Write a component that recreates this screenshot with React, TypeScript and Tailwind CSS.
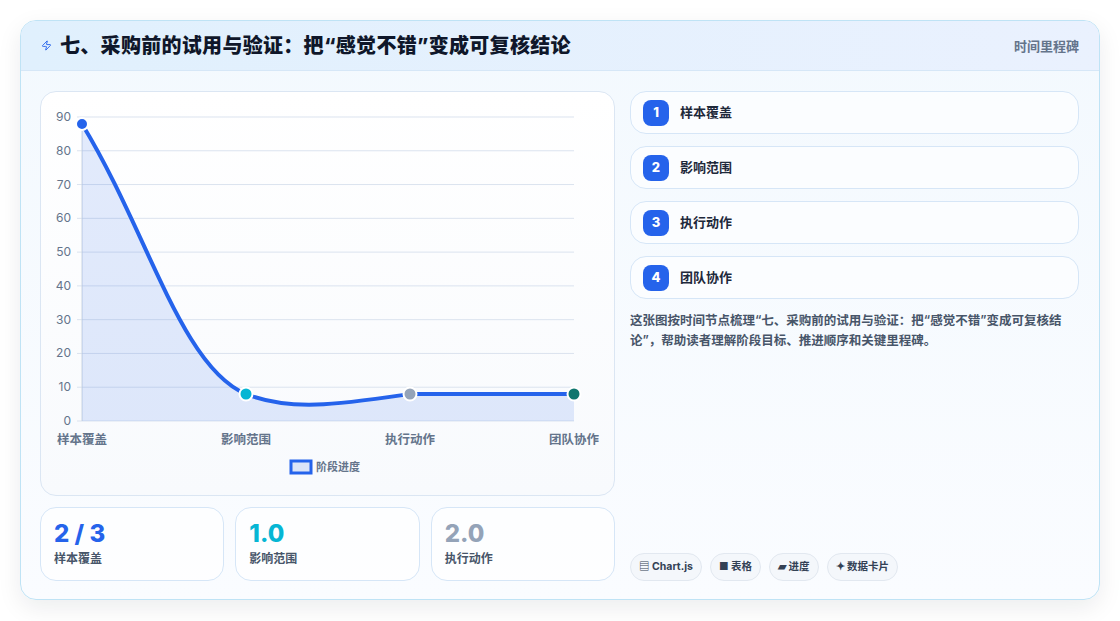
import { Zap } from "lucide-react";

const font = { fontFamily: "Inter, 'Noto Sans CJK SC', sans-serif" };

const steps = ["样本覆盖", "影响范围", "执行动作", "团队协作"];

function Chart() {
  const top = 25;
  const bottom = 329;
  const per = (bottom - top) / 90;
  const ticks = [0, 10, 20, 30, 40, 50, 60, 70, 80, 90];
  const xs = [41, 205, 369, 533];
  const line = "M41 32 C107 140 140 275 205 302 C250 320 300 312 369 302 L533 302";
  return (
    <svg width="574" height="404" className="block">
      {ticks.map((t) => {
        const y = bottom - t * per;
        return (
          <g key={t}>
            <line x1="36" x2="533" y1={y} y2={y} stroke="#dbe3ef" strokeWidth="1" />
            <text x="30" y={y + 4} textAnchor="end" fontSize="12" fill="#64748b" style={font}>{t}</text>
          </g>
        );
      })}
      <line x1="41" x2="41" y1={top} y2={bottom} stroke="#cbd5e1" />
      <path d={`${line} L533 ${bottom} L41 ${bottom} Z`} fill="#2563eb" fillOpacity="0.13" />
      <path d={line} fill="none" stroke="#2563eb" strokeWidth="4" strokeLinecap="round" />
      <circle cx={41} cy={32} r="6" fill="#2563eb" stroke="#fff" strokeWidth="2" />
      <circle cx={205} cy={302} r="6.5" fill="#06b6d4" stroke="#fff" strokeWidth="2" />
      <circle cx={369} cy={302} r="6.5" fill="#94a3b8" stroke="#fff" strokeWidth="2" />
      <circle cx={533} cy={302} r="6.5" fill="#0f766e" stroke="#fff" strokeWidth="2" />
      {steps.map((s, i) => (
        <text key={s} x={xs[i]} y={352} textAnchor="middle" fontSize="12.5" fontWeight="600" fill="#64748b" style={font}>{s}</text>
      ))}
      <rect x="250" y="369" width="20" height="12" fill="#dbe4f8" stroke="#2563eb" strokeWidth="3" />
      <text x="275" y="379" fontSize="11" fontWeight="600" fill="#64748b" style={font}>阶段进度</text>
    </svg>
  );
}

export default function App() {
  return (
    <div className="w-[1120px] h-[621px] bg-white p-5" style={font}>
      <div className="h-[580px] rounded-2xl border border-[#bfe3f5] bg-gradient-to-b from-[#f3f9fe] to-[#fafcff] shadow-[0_8px_24px_rgba(15,23,42,0.08)] overflow-hidden flex flex-col">
        <div className="h-14 flex items-center justify-between px-5 bg-gradient-to-r from-[#e0f0fd] to-[#eaf1fe] border-b border-[#d6e7f7]">
          <div className="flex items-center gap-2">
            <Zap size={11} className="text-[#2563eb]" />
            <span className="text-[20px] font-extrabold text-[#0f172a] tracking-[0.3px]">七、采购前的试用与验证：把“感觉不错”变成可复核结论</span>
          </div>
          <span className="text-[13px] font-semibold text-[#64748b] self-start mt-4">时间里程碑</span>
        </div>
        <div className="flex-1 flex gap-[15px] pl-[19px] pr-5 pt-5 pb-[18px]">
          <div className="w-[575px] flex flex-col gap-[11px]">
            <div className="h-[405px] rounded-2xl border border-[#dbe6f3] bg-gradient-to-b from-white to-[#f8fafd]">
              <Chart />
            </div>
            <div className="flex gap-[11px]">
              {[
                ["2 / 3", "样本覆盖", "text-[#2563eb]"],
                ["1.0", "影响范围", "text-[#06b6d4]"],
                ["2.0", "执行动作", "text-[#94a3b8]"],
              ].map(([v, l, c]) => (
                <div key={l} className="flex-1 h-[74px] rounded-2xl border border-[#d6e6f7] bg-white/70 px-[13px] pt-[12px]">
                  <div className={`text-[24px] leading-7 font-extrabold ${c}`}>{v}</div>
                  <div className="text-[12px] font-semibold text-[#475569] mt-0.5">{l}</div>
                </div>
              ))}
            </div>
          </div>
          <div className="flex-1 flex flex-col">
            <div className="flex flex-col gap-[12px]">
              {steps.map((s, i) => (
                <div key={s} className="h-[43px] rounded-2xl border border-[#d6e6f7] bg-white/60 flex items-center px-3 gap-[11px]">
                  <span className="w-[26px] h-[26px] rounded-lg bg-[#2563eb] text-white text-[13px] font-extrabold flex items-center justify-center">{i + 1}</span>
                  <span className="text-[13px] font-bold text-[#1e293b]">{s}</span>
                </div>
              ))}
            </div>
            <p className="mt-[12px] text-[12.5px] leading-5 font-semibold text-[#475569]">
              这张图按时间节点梳理“七、采购前的试用与验证：把“感觉不错”变成可复核结论”，帮助读者理解阶段目标、推进顺序和关键里程碑。
            </p>
            <div className="mt-auto flex gap-2">
              {["▤ Chart.js", "■ 表格", "▰ 进度", "✦ 数据卡片"].map((t) => (
                <span key={t} className="h-[28px] px-[8px] rounded-full border border-[#e2e8f0] bg-[#f4f7fb] text-[10.5px] font-bold text-[#334155] flex items-center">{t}</span>
              ))}
            </div>
          </div>
        </div>
      </div>
    </div>
  );
}
